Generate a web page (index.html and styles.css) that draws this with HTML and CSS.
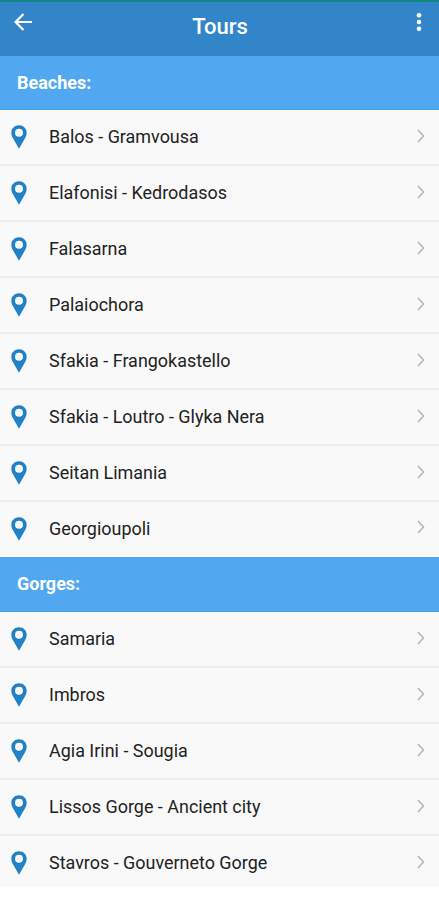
FILE: index.html
```html
<!DOCTYPE html>
<html lang="en">
<head>
<meta charset="utf-8">
<title>Tours</title>
<link rel="stylesheet" href="styles.css">
</head>
<body>
<svg class="sprite" aria-hidden="true">
  <symbol id="pin" viewBox="0 0 16 24"><path fill-rule="evenodd" d="M8 .2C3.600.2.3 3.500.3 7.800c0 2.200.9 4.100 2.100 6.200L8 23.800l5.600-9.800c1.200-2.100 2.100-4 2.100-6.200C15.700 3.500 12.400.2 8 .2zM8 3.800a4 4 0 1 1 0 8 4 4 0 0 1 0-8z"/></symbol>
  <symbol id="chevron" viewBox="0 0 8 14"><path d="M1 1l5.500 6L1 13"/></symbol>
</svg>
<header class="bar">
  <svg class="back" viewBox="0 0 18 18"><path d="M9.500 1L1.500 9l8 8M1.500 9H18"/></svg>
  <h1 class="title">Tours</h1>
  <svg class="more" viewBox="0 0 6 20"><circle cx="3" cy="3.300" r="2.300"/><circle cx="3" cy="10" r="2.300"/><circle cx="3" cy="16.700" r="2.300"/></svg>
</header>
<main>
  <h2 class="section">Beaches:</h2>
  <ul class="list">
    <li class="row"><svg class="pin"><use href="#pin"/></svg><span class="name">Balos - Gramvousa</span><svg class="chevron"><use href="#chevron"/></svg></li>
    <li class="row"><svg class="pin"><use href="#pin"/></svg><span class="name">Elafonisi - Kedrodasos</span><svg class="chevron"><use href="#chevron"/></svg></li>
    <li class="row"><svg class="pin"><use href="#pin"/></svg><span class="name">Falasarna</span><svg class="chevron"><use href="#chevron"/></svg></li>
    <li class="row"><svg class="pin"><use href="#pin"/></svg><span class="name">Palaiochora</span><svg class="chevron"><use href="#chevron"/></svg></li>
    <li class="row"><svg class="pin"><use href="#pin"/></svg><span class="name">Sfakia - Frangokastello</span><svg class="chevron"><use href="#chevron"/></svg></li>
    <li class="row"><svg class="pin"><use href="#pin"/></svg><span class="name">Sfakia - Loutro - Glyka Nera</span><svg class="chevron"><use href="#chevron"/></svg></li>
    <li class="row"><svg class="pin"><use href="#pin"/></svg><span class="name">Seitan Limania</span><svg class="chevron"><use href="#chevron"/></svg></li>
    <li class="row"><svg class="pin"><use href="#pin"/></svg><span class="name">Georgioupoli</span><svg class="chevron"><use href="#chevron"/></svg></li>
  </ul>
  <h2 class="section tall">Gorges:</h2>
  <ul class="list">
    <li class="row"><svg class="pin"><use href="#pin"/></svg><span class="name">Samaria</span><svg class="chevron"><use href="#chevron"/></svg></li>
    <li class="row"><svg class="pin"><use href="#pin"/></svg><span class="name">Imbros</span><svg class="chevron"><use href="#chevron"/></svg></li>
    <li class="row"><svg class="pin"><use href="#pin"/></svg><span class="name">Agia Irini - Sougia</span><svg class="chevron"><use href="#chevron"/></svg></li>
    <li class="row"><svg class="pin"><use href="#pin"/></svg><span class="name">Lissos Gorge - Ancient city</span><svg class="chevron"><use href="#chevron"/></svg></li>
    <li class="row last"><svg class="pin"><use href="#pin"/></svg><span class="name">Stavros - Gouverneto Gorge</span><svg class="chevron"><use href="#chevron"/></svg></li>
  </ul>
</main>
</body>
</html>
```
FILE: styles.css
```css
* { box-sizing: border-box; }
body { margin: 0; height: 900px; overflow: hidden; background: #fff; font-family: Roboto, sans-serif; color: #222; }
.sprite { display: none; }
svg { display: block; }
.bar {
  display: grid;
  grid-template-columns: 60px 1fr 60px;
  height: 56px;
  border-top: 2px solid #14857f;
  background: #3385c9;
  color: #fff;
}
.back { width: 18px; height: 18px; margin: 11px 0 0 14px; fill: none; stroke: #fff; stroke-width: 2.200; }
.title { margin: 0; padding: 11px 0 0 1px; font-size: 22px; line-height: 28px; font-weight: 500; text-align: center; }
.more { width: 6px; height: 20px; margin: 10px 17px 0 auto; fill: #fff; }
.section {
  height: 54px;
  margin: 0;
  padding-left: 17px;
  font-size: 18px;
  line-height: 53px;
  font-weight: 700;
  color: #fff;
  background: #52a8f0;
  border-bottom: 1px solid #4a9fe5;
}
.section.tall { height: 55px; line-height: 54px; }
.list { margin: 0; padding: 0; list-style: none; }
.row {
  display: flex;
  align-items: center;
  height: 56px;
  padding: 0 14px 0 11px;
  background: #f9f9f9;
  border-bottom: 2px solid #ececec;
}
.row:last-child { height: 55px; padding-bottom: 2px; border-bottom: 0; }
.row.last { height: 51px; padding-top: 3px; padding-bottom: 0; }
.pin { width: 16px; height: 24px; fill: #2180c6; }
.name { flex: 1; margin-left: 22px; font-size: 17.950px; line-height: 24px; }
.chevron { width: 8px; height: 14px; margin-top: -3px; fill: none; stroke: #b4b4b4; stroke-width: 1.500; }
```
